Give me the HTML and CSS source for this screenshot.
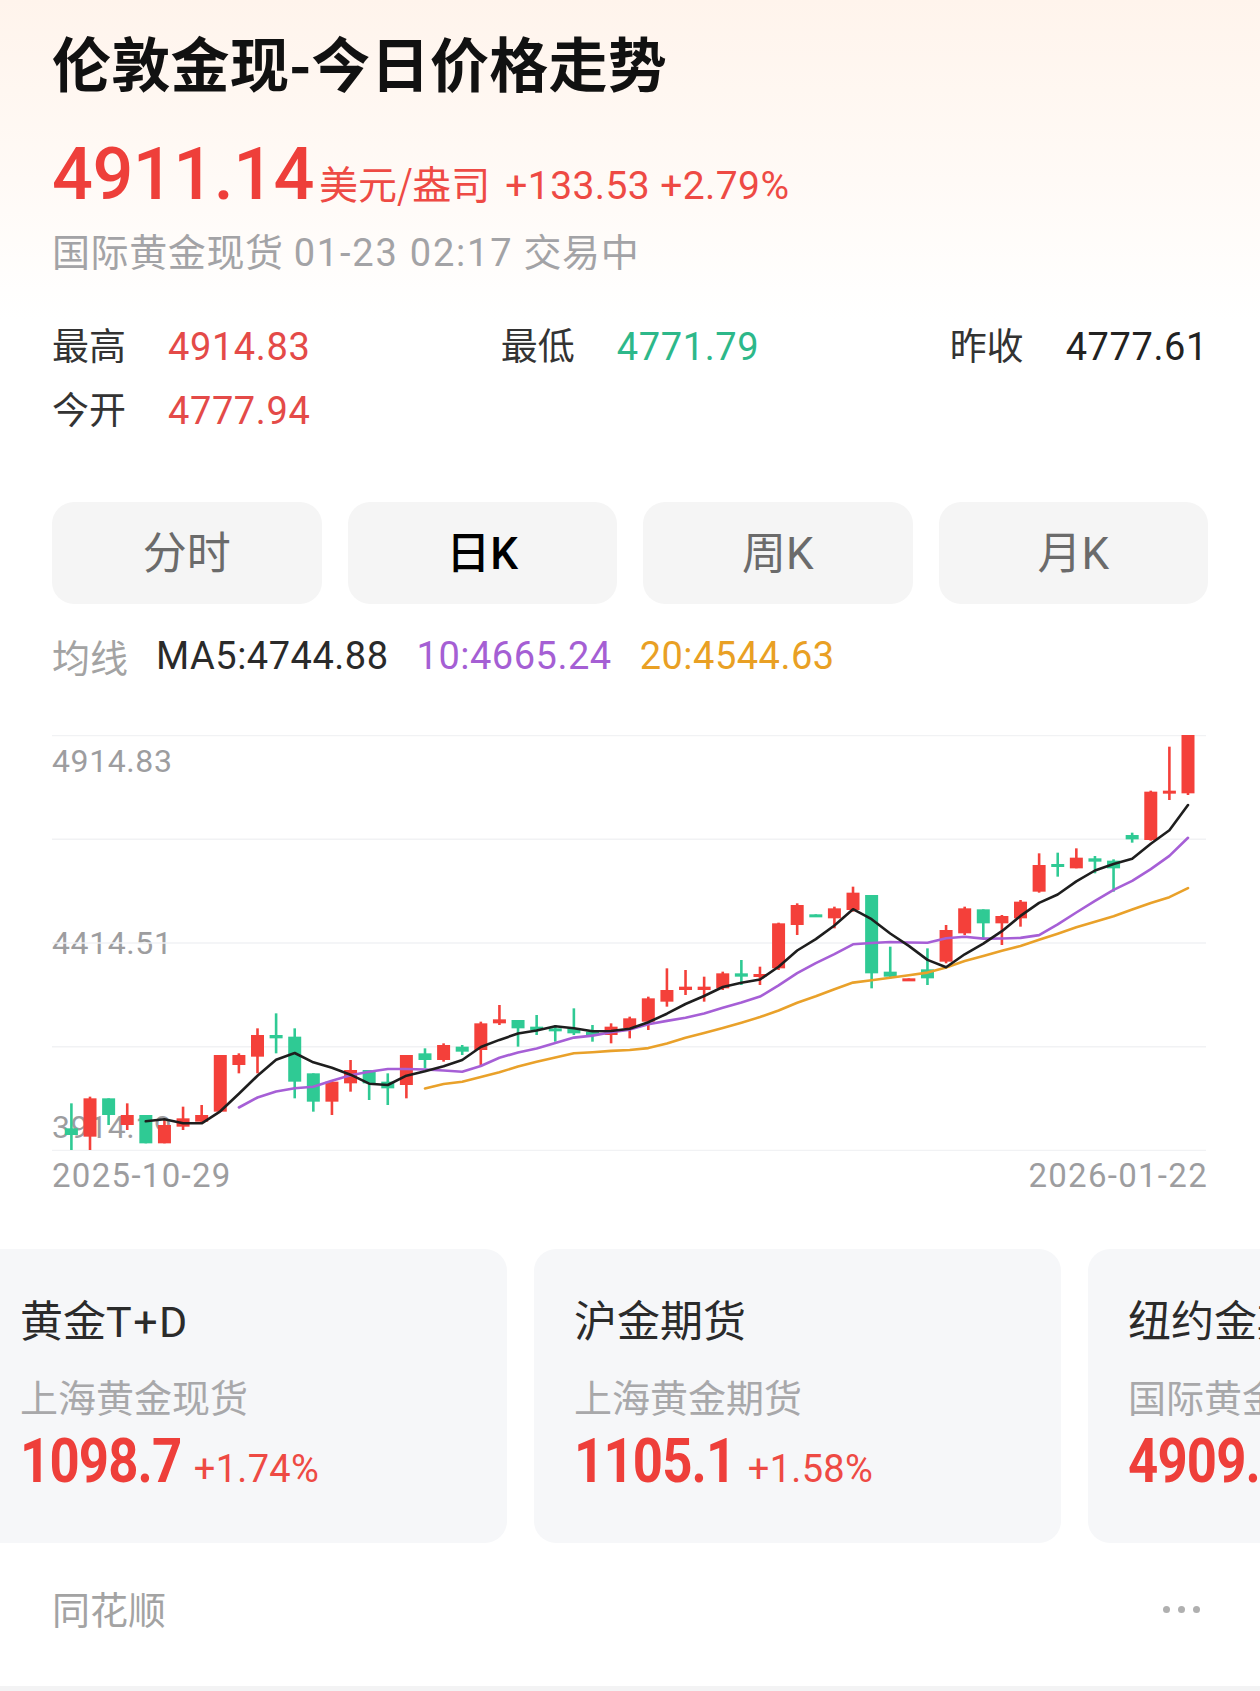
FILE: index.html
```html
<!DOCTYPE html>
<html lang="zh-CN">
<head>
<meta charset="utf-8">
<title>伦敦金现-今日价格走势</title>
<link rel="stylesheet" href="styles.css">
</head>
<body>
<div class="page">
  <header class="hero">
    <h1 class="title">伦敦金现-今日价格走势</h1>
    <div class="price-row"><span class="price">4911.14</span><span class="unit">美元/盎司</span><span class="change">+133.53 +2.79%</span></div>
    <div class="meta">国际黄金现货 <span class="meta-time">01-23 02:17</span> 交易中</div>
  </header>

  <div class="stats">
    <div class="stat"><span class="stat-label">最高</span><span class="stat-value up">4914.83</span></div>
    <div class="stat"><span class="stat-label">最低</span><span class="stat-value down">4771.79</span></div>
    <div class="stat"><span class="stat-label">昨收</span><span class="stat-value">4777.61</span></div>
    <div class="stat"><span class="stat-label">今开</span><span class="stat-value up">4777.94</span></div>
  </div>

  <div class="tabs">
    <div class="tab">分时</div>
    <div class="tab active">日K</div>
    <div class="tab">周K</div>
    <div class="tab">月K</div>
  </div>

  <div class="ma">
    <span class="ma-label">均线</span>
    <span class="ma5">MA5:4744.88</span>
    <span class="ma10">10:4665.24</span>
    <span class="ma20">20:4544.63</span>
  </div>

  <div class="chart">
    <span class="axis-label axis-top">4914.83</span>
    <span class="axis-label axis-mid">4414.51</span>
    <span class="axis-label axis-bottom">3914.19</span>
    <svg id="kline" class="kline" width="1154" height="416" viewBox="0 0 1154 416"></svg>
  </div>
  <div class="dates"><span>2025-10-29</span><span>2026-01-22</span></div>

  <div class="cards-viewport">
    <div class="cards">
      <div class="card">
        <div class="card-title">黄金<span class="latin">T+D</span></div>
        <div class="card-sub">上海黄金现货</div>
        <div class="card-quote"><span class="card-price">1098.7</span><span class="card-pct">+1.74%</span></div>
      </div>
      <div class="card">
        <div class="card-title">沪金期货</div>
        <div class="card-sub">上海黄金期货</div>
        <div class="card-quote"><span class="card-price">1105.1</span><span class="card-pct">+1.58%</span></div>
      </div>
      <div class="card">
        <div class="card-title">纽约金期货</div>
        <div class="card-sub">国际黄金期货</div>
        <div class="card-quote"><span class="card-price">4909.60</span><span class="card-pct">+2.71%</span></div>
      </div>
    </div>
  </div>

  <footer class="footer">
    <span class="source">同花顺</span>
    <span class="more"><i></i><i></i><i></i></span>
  </footer>
  <div class="bottom-bar"></div>
</div>
<script src="chart.js"></script>
</body>
</html>
```

FILE: styles.css
```css
* { box-sizing: border-box; }
html, body { margin: 0; padding: 0; background: #fff; }
body {
  font-family: "Noto Sans CJK SC", sans-serif;
  color: #222;
}
.page {
  width: 1260px;
  min-height: 1691px;
  overflow: hidden;
  background: linear-gradient(180deg, #fff4ec 0px, #fffaf6 180px, #ffffff 320px);
}
.hero { padding: 27px 52px 0; }
.title {
  margin: 0;
  font-size: 59px;
  line-height: 70px;
  font-weight: 700;
  color: #111;
  letter-spacing: 0.3px;
}
.price-row {
  margin-top: 38px;
  height: 80px;
  line-height: 80px;
  white-space: nowrap;
  color: #ee3f3a;
}
.price {
  font-family: Roboto, sans-serif;
  font-size: 72px;
  font-weight: 500;
  letter-spacing: -0.5px;
}
.unit {
  font-family: "Noto Sans CJK SC", sans-serif;
  font-size: 39px;
  line-height: 1;
  margin-left: 5px;
  color: #ee4a44;
}
.change {
  font-family: Roboto, "Noto Sans CJK SC", sans-serif;
  font-size: 39px;
  line-height: 1;
  margin-left: 15px;
  letter-spacing: 0.4px;
  color: #ee4a44;
}
.meta {
  margin-top: 16px;
  font-family: Roboto, "Noto Sans CJK SC", sans-serif;
  font-size: 38px;
  line-height: 44px;
  color: #a3a3a6;
  white-space: nowrap;
  letter-spacing: 0.6px;
}
.meta-time { letter-spacing: 1.8px; }

.stats {
  margin-top: 37px;
  padding: 0 52px;
  display: grid;
  grid-template-columns: repeat(3, auto);
  justify-content: space-between;
  grid-auto-rows: 64px;
  align-items: center;
}
.stat { display: flex; align-items: baseline; white-space: nowrap; }
.stat-label { font-size: 37px; color: #333; width: 116px; }
.stat-value {
  font-family: Roboto, sans-serif;
  font-size: 38px;
  color: #222;
  letter-spacing: 0.6px;
}
.stat-value.up { color: #e44a48; }
.stat-value.down { color: #2db88a; }

.tabs {
  margin-top: 62px;
  padding: 0 52px;
  display: grid;
  grid-template-columns: repeat(4, 1fr);
  gap: 26px;
}
.tab {
  height: 102px;
  padding-bottom: 6px;
  border-radius: 22px;
  background: #f5f5f5;
  display: flex;
  align-items: center;
  justify-content: center;
  font-family: Roboto, "Noto Sans CJK SC", sans-serif;
  font-size: 44px;
  color: #6b6b6b;
}
.tab.active { color: #000; font-weight: 500; }

.ma {
  margin-top: 29px;
  padding: 0 52px;
  display: flex;
  gap: 28px;
  font-family: Roboto, "Noto Sans CJK SC", sans-serif;
  font-size: 38px;
  line-height: 46px;
  white-space: nowrap;
}
.ma-label { color: #a3a3a3; font-family: "Noto Sans CJK SC", sans-serif; margin-right: 0; }
.ma5, .ma10, .ma20 { letter-spacing: 0.5px; }
.ma5 { color: #2a2a2a; }
.ma10 { color: #a55fd4; }
.ma20 { color: #e9a024; }

.chart {
  position: relative;
  margin: 56px 54px 0 52px;
  height: 416px;
}
.kline { position: relative; display: block; }
.axis-label {
  position: absolute;
  left: 0;
  font-family: Roboto, sans-serif;
  font-size: 32px;
  line-height: 36px;
  color: #9d9d9f;
  letter-spacing: 0.6px;
}
.axis-top { top: 8px; }
.axis-mid { top: 190px; }
.axis-bottom { top: 374px; }

.dates {
  margin-top: 5px;
  padding: 0 52px;
  display: flex;
  justify-content: space-between;
  font-family: Roboto, sans-serif;
  font-size: 33px;
  line-height: 40px;
  color: #9d9d9f;
  letter-spacing: 1.3px;
}

.cards-viewport { margin-top: 53px; overflow: hidden; }
.cards { display: flex; gap: 27px; margin-left: -20px; }
.card {
  flex: 0 0 527px;
  height: 294px;
  padding: 48px 40px 0;
  border-radius: 22px;
  background: #f6f7f9;
  white-space: nowrap;
}
.card-title {
  font-family: Roboto, "Noto Sans CJK SC", sans-serif;
  font-size: 43px;
  line-height: 50px;
  color: #2b2b2b;
}
.card-title .latin { letter-spacing: 1.5px; }
.card-sub {
  margin-top: 26px;
  font-size: 38px;
  line-height: 46px;
  color: #a8a8aa;
}
.card-quote {
  margin-top: 12px;
  line-height: 60px;
  height: 60px;
  color: #ee3f3a;
}
.card-price {
  display: inline-block;
  font-family: Roboto, sans-serif;
  font-size: 62px;
  font-weight: 700;
  letter-spacing: -1px;
  transform: scaleX(0.85);
  transform-origin: left center;
  margin-right: -29px;
}
.card-pct {
  font-family: Roboto, sans-serif;
  font-size: 38px;
  line-height: 1;
  margin-left: 13px;
  letter-spacing: 0.3px;
  color: #ee4a44;
}

.footer {
  margin-top: 42px;
  height: 101px;
  padding: 0 60px 0 52px;
  display: flex;
  justify-content: space-between;
  align-items: flex-start;
}
.source { font-size: 38px; line-height: 46px; color: #a3a3a3; }
.more { display: flex; gap: 8px; margin-top: 21px; }
.more i { width: 7px; height: 7px; border-radius: 50%; background: #b0b0b0; }
.bottom-bar { height: 5px; background: #f3f3f4; }
```

FILE: chart.js
```js
(function () {
  var svg = document.getElementById('kline');
  var NS = 'http://www.w3.org/2000/svg';
  var W = 1154, H = 415;
  var MAX = 4914.83, MIN = 3914.19;
  var RED = '#f4403a', GREEN = '#2fca94';

  // daily candles from 2025-10-29 to 2026-01-22, sampled from the screen:
  // [dir, bodyTop, bodyBottom, high, low] in chart reading units
  var raw = [
    ['d',1285,1305,1210,1350],['u',1195,1310,1190,1350],['d',1195,1245,1195,1275],['u',1245,1275,1210,1290],
    ['d',1245,1330,1245,1330],['u',1275,1330,1260,1330],['u',1255,1280,1220,1290],['u',1245,1265,1215,1270],
    ['u',1065,1235,1065,1235],['u',1065,1095,1060,1120],['u',1005,1070,985,1120],['d',1005,1015,940,1060],
    ['d',1010,1145,985,1195],['d',1120,1205,1120,1235],['u',1145,1205,1140,1245],['u',1110,1150,1080,1175],
    ['d',1110,1150,1110,1200],['d',1145,1165,1120,1215],['u',1065,1155,1065,1195],['d',1060,1080,1045,1105],
    ['u',1035,1080,1030,1085],['d',1040,1055,1035,1065],['u',970,1050,965,1100],['u',958,970,915,975],
    ['d',960,985,960,1040],['d',980,990,945,1005],['d',985,990,975,1025],['d',985,1000,925,1005],
    ['d',995,1005,975,1025],['u',980,1005,970,1030],['u',955,985,950,1015],['u',895,965,890,990],
    ['u',870,905,805,920],['u',860,870,810,885],['u',860,870,830,905],['u',820,865,815,870],
    ['d',820,830,780,855],['u',822,828,800,855],['u',670,805,668,810],['u',615,675,610,705],
    ['d',643,650,643,650],['u',625,655,620,685],['u',578,630,560,635],['d',585,820,585,865],
    ['d',815,830,740,835],['u',835,843,835,843],['d',808,835,745,855],['u',690,785,675,790],
    ['u',625,700,620,705],['d',628,670,628,715],['u',648,670,645,735],['u',605,655,600,680],
    ['u',495,575,460,578],['d',492,500,458,530],['u',473,505,445,505],['d',475,485,468,520],
    ['d',482,505,478,575],['d',405,418,398,428],['u',275,420,272,422],['u',272,280,140,300],
    ['u',105,280,105,285]
  ];

  function toPrice(r) { return MAX - (r - 105) * (MAX - MIN) / 1245; }
  function y(p) { return (MAX - p) / (MAX - MIN) * H; }

  var candles = raw.map(function (c) {
    var top = toPrice(c[1]), bottom = toPrice(c[2]);
    var up = c[0] === 'u';
    return { up: up, open: up ? bottom : top, close: up ? top : bottom, high: toPrice(c[3]), low: toPrice(c[4]) };
  });

  function el(name, attrs) {
    var e = document.createElementNS(NS, name);
    for (var k in attrs) e.setAttribute(k, attrs[k]);
    svg.appendChild(e);
    return e;
  }

  for (var g = 0; g < 5; g++) {
    var gy = Math.min(H, g * H / 4) + 0.5;
    el('line', { x1: 0, x2: W, y1: gy, y2: gy, stroke: '#f1f2f4', 'stroke-width': 1.5 });
  }

  var X0 = 19.4, STEP = 18.61, BW = 13;
  function cx(i) { return X0 + i * STEP; }

  candles.forEach(function (c, i) {
    var color = c.up ? RED : GREEN;
    var x = cx(i);
    el('line', { x1: x, x2: x, y1: y(c.high), y2: y(c.low), stroke: color, 'stroke-width': 2.6 });
    var t = y(Math.max(c.open, c.close)), b = y(Math.min(c.open, c.close));
    var h = Math.max(3, b - t);
    el('rect', { x: x - BW / 2, y: t, width: BW, height: h, fill: color });
  });

  function ma(n, color) {
    var pts = [];
    for (var i = n - 1; i < candles.length; i++) {
      var s = 0;
      for (var j = i - n + 1; j <= i; j++) s += candles[j].close;
      pts.push(cx(i).toFixed(1) + ',' + y(s / n).toFixed(1));
    }
    el('polyline', { points: pts.join(' '), fill: 'none', stroke: color, 'stroke-width': 2.6, 'stroke-linejoin': 'round', 'stroke-linecap': 'round' });
  }
  ma(20, '#e9a12a');
  ma(10, '#a65fd6');
  ma(5, '#1e1e1e');
})();
```
